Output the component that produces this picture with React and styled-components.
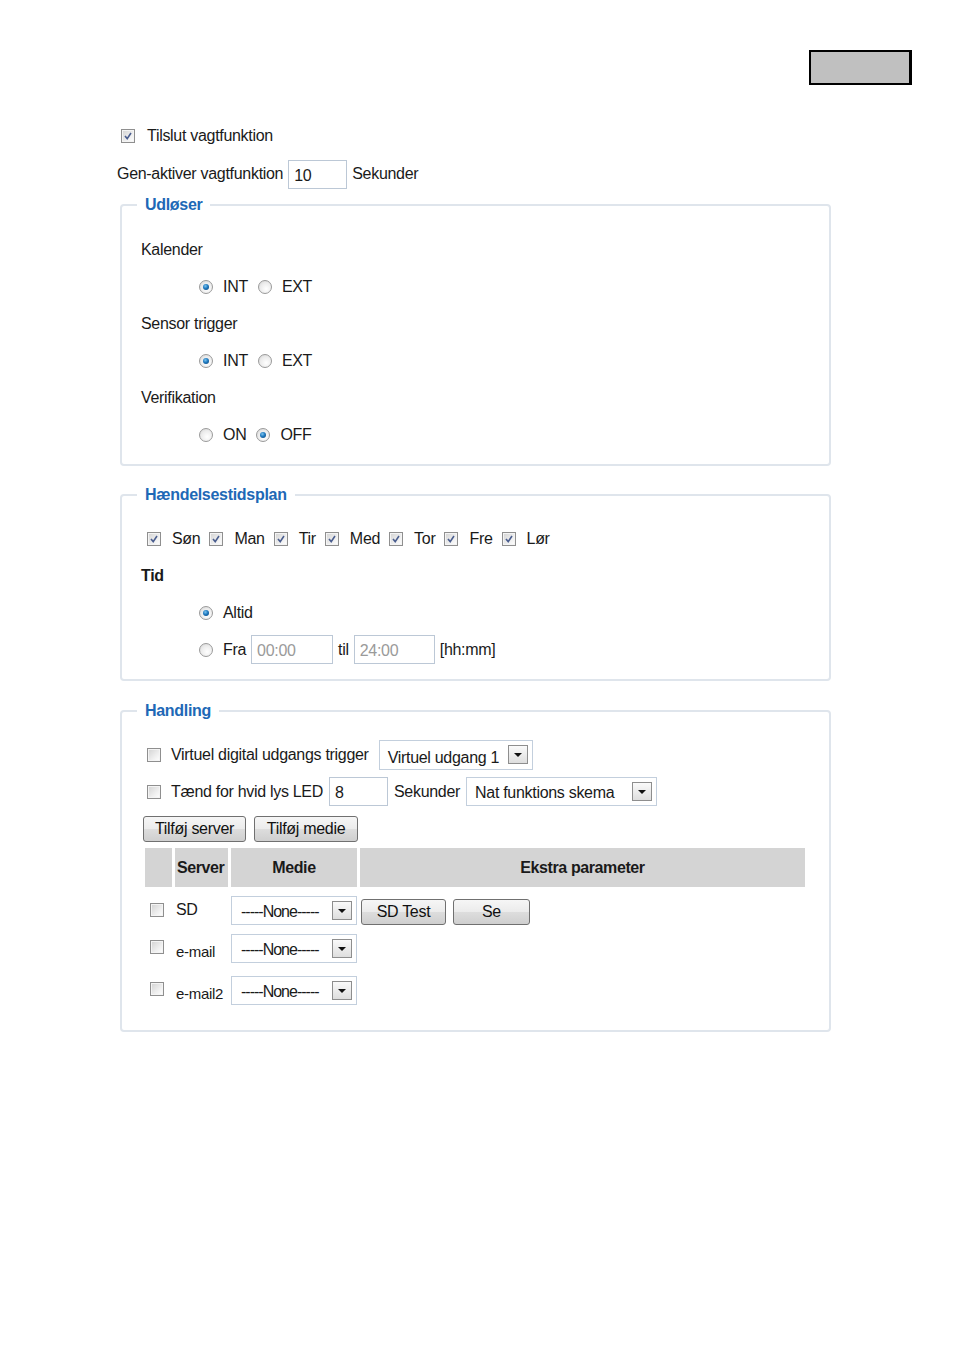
import styled, { createGlobalStyle } from 'styled-components';

const GlobalStyle = createGlobalStyle`
    body {
        margin: 0;
        background: #fff;
        font-family: "Liberation Sans", Arial, sans-serif;
        font-size: 16px;
        letter-spacing: -0.3px;
        color: #1a1a1a;
    }
`;

const Page = styled.div`
    width: 954px;
    min-height: 1350px;
    box-sizing: border-box;
    padding-top: 50px;
`;

const TopBar = styled.div`
    display: flex;
    justify-content: flex-end;
    padding-right: 42px;
`;

const GrayBlock = styled.div`
    width: 98px;
    height: 31px;
    background: #c0c0c0;
    border: 2px solid #000;
    border-right-width: 3px;
`;

const Content = styled.div`
    padding-left: 117px;
    width: 713px;
`;

const Row = styled.div`
    display: flex;
    align-items: center;
    gap: ${p => p.$gap ?? 6}px;
    height: ${p => p.$h ?? 37}px;
    margin-top: ${p => p.$mt ?? 0}px;
    padding-left: ${p => p.$indent ?? 0}px;
`;

const Box = styled.span`
    position: relative;
    display: inline-block;
    flex: none;
    width: 12px;
    height: 12px;
    border: 1px solid #8f8f8f;
    background: linear-gradient(135deg, #d2d2d2 0%, #efefef 60%, #ffffff 100%);
    box-shadow: inset 0 0 0 1px #f4f4f4;

    & svg {
        position: absolute;
        left: 1px;
        top: 1px;
    }
`;

const Check = ({ checked }) => (
    <Box>
        {checked && (
            <svg width="10" height="10" viewBox="0 0 10 10">
                <path d="M2 5 L4.2 7.6 L8 2" fill="none" stroke="#4a5d8e" strokeWidth="1.6" />
            </svg>
        )}
    </Box>
);

const RadioDot = styled.span`
    position: relative;
    display: inline-block;
    flex: none;
    width: 12px;
    height: 12px;
    border-radius: 50%;
    border: 1px solid #9a9a9a;
    background: radial-gradient(circle at 60% 65%, #ffffff 0%, #ececec 55%, #cfcfcf 100%);

    &::after {
        content: '';
        display: ${p => p.$on ? 'block' : 'none'};
        position: absolute;
        left: 3px;
        top: 3px;
        width: 6px;
        height: 6px;
        border-radius: 50%;
        background: radial-gradient(circle at 40% 35%, #7cc3ee 0%, #1f7ac0 45%, #0d3d6e 100%);
    }
`;

const Fieldset = styled.fieldset`
    margin: ${p => p.$mt ?? 0}px 0 0 3px;
    padding: 0 0 ${p => p.$pb ?? 13}px 19px;
    border: 2px solid #dfe5ec;
    border-radius: 4px;
    width: 688px;
`;

const Legend = styled.legend`
    margin-left: -4px;
    padding: 0 8px;
    line-height: 22px;
    font-weight: bold;
    letter-spacing: -0.3px;
    color: #2068b6;
`;

const Body = styled.div`
    padding-top: ${p => p.$pt ?? 12}px;
`;

const Bold = styled.span`
    font-weight: bold;
`;

const Label = styled.span`
    white-space: nowrap;
    margin-left: ${p => p.$ml ?? 0}px;
    margin-right: ${p => p.$mr ?? 0}px;
`;

const TextInput = styled.span`
    display: inline-flex;
    align-items: center;
    box-sizing: border-box;
    width: ${p => p.$w}px;
    height: 29px;
    padding: 3px 0 0 5px;
    border: 1px solid #bcc8d6;
    background: #fff;
    color: ${p => p.$dim ? '#9a9a9a' : '#1a1a1a'};
`;

const Select = styled.span`
    display: inline-flex;
    align-items: center;
    justify-content: space-between;
    box-sizing: border-box;
    width: ${p => p.$w}px;
    height: ${p => p.$h ?? 29}px;
    margin-left: ${p => p.$ml ?? 0}px;
    padding: 0 4px 0 ${p => p.$pl ?? 8}px;
    border: 1px solid #c3cfdd;
    background: #fff;
    overflow: hidden;
    white-space: nowrap;
`;

const SelectText = styled.span`
    padding-top: ${p => p.$pt ?? 3}px;
    letter-spacing: ${p => p.$tight ? '-1px' : 'inherit'};
`;

const Arrow = styled.span`
    display: inline-flex;
    align-items: center;
    justify-content: center;
    flex: none;
    box-sizing: border-box;
    width: 20px;
    height: 19px;
    border: 1px solid #8e8e8e;
    background: linear-gradient(#fafafa, #dedede);

    &::after {
        content: '';
        border-left: 4px solid transparent;
        border-right: 4px solid transparent;
        border-top: 4px solid #111;
    }
`;

const Button = styled.span`
    display: inline-flex;
    align-items: center;
    justify-content: center;
    box-sizing: border-box;
    width: ${p => p.$w}px;
    height: 26px;
    border: 1px solid #707070;
    border-radius: 3px;
    background: linear-gradient(#f6f6f6 0%, #ebebeb 50%, #dddddd 51%, #cfcfcf 100%);
    color: #111;
`;

const ButtonRow = styled.div`
    display: flex;
    gap: 8px;
    margin: 6px 0 0 2px;
`;

const Grid = styled.div`
    display: grid;
    grid-template-columns: 27px 53px 126px 445px;
    column-gap: 3px;
    margin: 6px 0 0 4px;
`;

const HeadCell = styled.div`
    display: flex;
    align-items: center;
    justify-content: ${p => p.$left ? 'flex-start' : 'center'};
    padding-left: ${p => p.$left ? '2px' : '0'};
    height: 39px;
    background: #d4d4d4;
    font-weight: bold;
    letter-spacing: -0.4px;
`;

const Cell = styled.div`
    display: flex;
    align-items: flex-start;
    gap: 7px;
    height: ${p => p.$h}px;
    padding-top: ${p => p.$pt ?? 0}px;
    padding-left: ${p => p.$pl ?? 0}px;
    box-sizing: border-box;
    line-height: 18px;
`;

const OptionPair = ({ a, b, first }) => (
    <Row $indent={58} $gap={10}>
        <RadioDot $on={first} />
        <Label>{a}</Label>
        <RadioDot $on={!first} />
        <Label>{b}</Label>
    </Row>
);

const days = ['Søn', 'Man', 'Tir', 'Med', 'Tor', 'Fre', 'Lør'];

const servers = [
    { name: 'SD', h: 38, boxTop: 16, nameTop: 14, buttons: true },
    { name: 'e-mail', h: 42, boxTop: 15, nameTop: 18 },
    { name: 'e-mail2', h: 43, boxTop: 15, nameTop: 18 },
];

export default function App() {
    return (
        <Page>
            <GlobalStyle />
            <TopBar>
                <GrayBlock />
            </TopBar>

            <Content>
                <Row $h={22} $mt={40} $indent={4} $gap={12}>
                    <Check checked />
                    <Label>Tilslut vagtfunktion</Label>
                </Row>
                <Row $h={28} $mt={13} $gap={5}>
                    <Label>Gen-aktiver vagtfunktion</Label>
                    <TextInput $w={59}>10</TextInput>
                    <Label>Sekunder</Label>
                </Row>

                <Fieldset $mt={6} $pb={11}>
                    <Legend>Udløser</Legend>
                    <Body $pt={15}>
                        <Row>Kalender</Row>
                        <OptionPair a="INT" b="EXT" first />
                        <Row>Sensor trigger</Row>
                        <OptionPair a="INT" b="EXT" first />
                        <Row>Verifikation</Row>
                        <OptionPair a="ON" b="OFF" />
                    </Body>
                </Fieldset>

                <Fieldset $mt={18} $pb={11}>
                    <Legend>Hændelsestidsplan</Legend>
                    <Body $pt={14}>
                        <Row $indent={6} $gap={9}>
                            {days.map(d => (
                                <Row key={d} $gap={11}>
                                    <Check checked />
                                    <Label>{d}</Label>
                                </Row>
                            ))}
                        </Row>
                        <Row><Bold>Tid</Bold></Row>
                        <Row $indent={58} $gap={10}>
                            <RadioDot $on />
                            <Label>Altid</Label>
                        </Row>
                        <Row $indent={58} $gap={5}>
                            <RadioDot />
                            <Label $ml={5}>Fra</Label>
                            <TextInput $w={82} $dim>00:00</TextInput>
                            <Label>til</Label>
                            <TextInput $w={81} $dim>24:00</TextInput>
                            <Label>[hh:mm]</Label>
                        </Row>
                    </Body>
                </Fieldset>

                <Fieldset $mt={19} $pb={20}>
                    <Legend>Handling</Legend>
                    <Body $pt={14}>
                        <Row $indent={6} $gap={10}>
                            <Check />
                            <Label>Virtuel digital udgangs trigger</Label>
                            <Select $w={154} $h={30}>
                                <SelectText $pt={7}>Virtuel udgang 1</SelectText>
                                <Arrow />
                            </Select>
                        </Row>
                        <Row $indent={6} $gap={10}>
                            <Check />
                            <Label $mr={-4}>Tænd for hvid lys LED</Label>
                            <TextInput $w={59}>8</TextInput>
                            <Label $ml={-4}>Sekunder</Label>
                            <Select $w={191} $ml={-4}>
                                <SelectText>Nat funktions skema</SelectText>
                                <Arrow />
                            </Select>
                        </Row>

                        <ButtonRow>
                            <Button $w={103}>Tilføj server</Button>
                            <Button $w={104}>Tilføj medie</Button>
                        </ButtonRow>

                        <Grid>
                            <HeadCell />
                            <HeadCell $left>Server</HeadCell>
                            <HeadCell>Medie</HeadCell>
                            <HeadCell>Ekstra parameter</HeadCell>

                            {servers.map(s => [
                                <Cell key={s.name + 'c'} $h={s.h} $pt={s.boxTop} $pl={5}>
                                    <Check />
                                </Cell>,
                                <Cell key={s.name + 'n'} $h={s.h} $pt={s.nameTop} $pl={1}>
                                    <Label style={{ fontSize: s.buttons ? 16 : 15 }}>{s.name}</Label>
                                </Cell>,
                                <Cell key={s.name + 'm'} $h={s.h} $pt={9}>
                                    <Select $w={126} $pl={9}>
                                        <SelectText $tight>-----None-----</SelectText>
                                        <Arrow />
                                    </Select>
                                </Cell>,
                                <Cell key={s.name + 'e'} $h={s.h} $pt={12} $pl={1}>
                                    {s.buttons && (
                                        <>
                                            <Button $w={85}>SD Test</Button>
                                            <Button $w={77}>Se</Button>
                                        </>
                                    )}
                                </Cell>,
                            ])}
                        </Grid>
                    </Body>
                </Fieldset>
            </Content>
        </Page>
    );
}
